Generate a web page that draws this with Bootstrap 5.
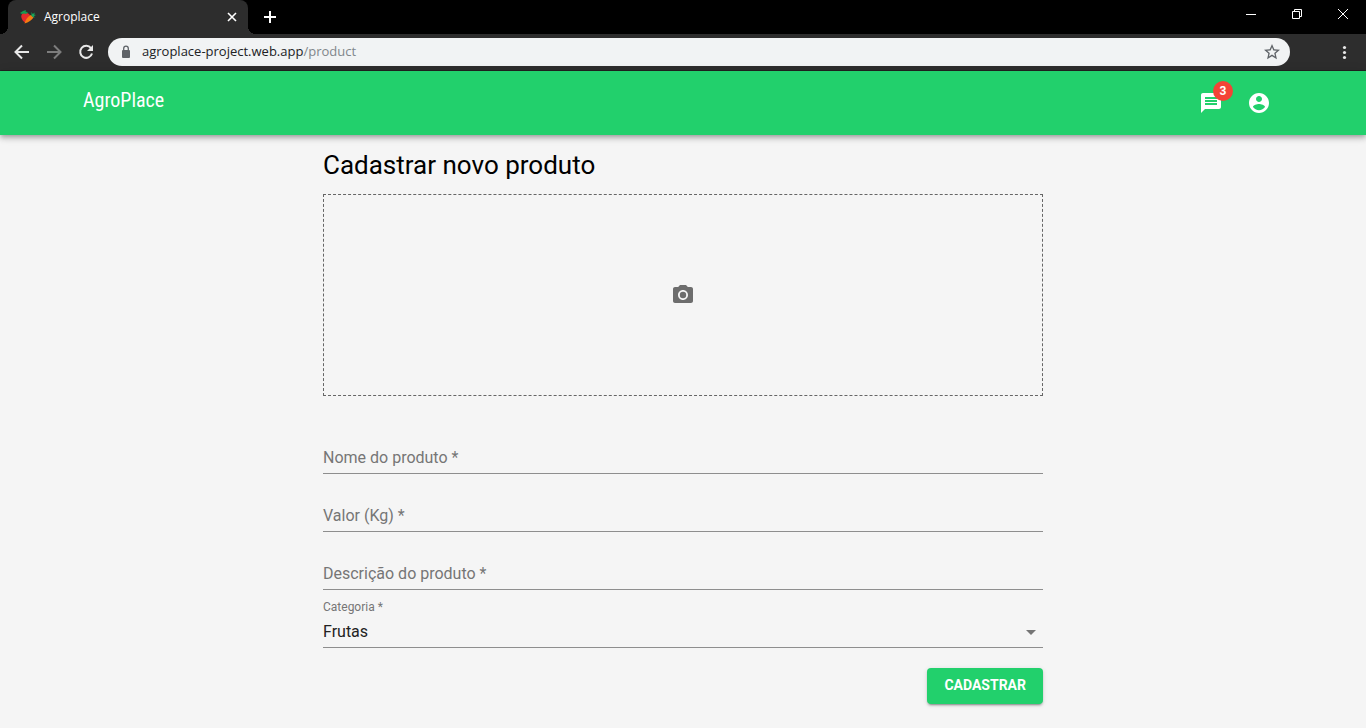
<!DOCTYPE html>
<html lang="pt-BR">
<head>
<meta charset="utf-8">
<meta name="viewport" content="width=device-width, initial-scale=1">
<title>Agroplace</title>
<link href="https://cdn.jsdelivr.net/npm/bootstrap@5.3.0/dist/css/bootstrap.min.css" rel="stylesheet">
<style>
  :root { --agro: #22d06c; --chrome: #2d2d2d; --ink-soft: #767676; }
  body { background: #f5f5f5; color: #000; font-family: Roboto, sans-serif; font-size: 16px; }
  svg { display: block; flex: none; }
  button { border: 0; background: none; padding: 0; color: inherit; }

  /* browser window */
  .browser { font-family: "Open Sans", sans-serif; color: #fff; }
  .tab-strip { background: #000; height: 34px; padding-left: 8px; }
  .browser-tab { position: relative; width: 240px; height: 34px; padding: 0 10px 0 12px; background: var(--chrome); border-radius: 8px 8px 0 0; font-size: 12px; }
  .browser-tab::before, .browser-tab::after { content: ""; position: absolute; bottom: 0; width: 8px; height: 8px; }
  .browser-tab::before { left: -8px; background: radial-gradient(circle at 0 0, #000 8px, var(--chrome) 8px); }
  .browser-tab::after { right: -8px; background: radial-gradient(circle at 100% 0, #000 8px, var(--chrome) 8px); }
  .new-tab { width: 28px; margin-left: 8px; }
  .window-btn { width: 46px; height: 28px; }
  .toolbar { background: var(--chrome); height: 37px; padding: 0 12px; border-bottom: 1px solid #222; }
  .nav-btn { width: 20px; margin-right: 12px; }
  .omnibox { height: 28px; padding: 0 10px; border-radius: 14px; background: #f1f3f4; color: #202124; font-size: 13px; margin-right: 44px; }
  .url-path { color: #80868b; }

  /* application */
  .app-bar { height: 64px; background: var(--agro); box-shadow: 0 2px 4px -1px rgba(0,0,0,.2), 0 4px 5px rgba(0,0,0,.14), 0 1px 10px rgba(0,0,0,.12); }
  .app-bar .inner { max-width: 1200px; }
  .logo { font-family: "Liberation Sans Narrow", "Roboto Condensed", sans-serif; font-size: 20px; line-height: 32px; padding-bottom: 6px; color: #fff; }
  .round-btn { width: 48px; height: 48px; color: #fff; }
  .count { position: absolute; top: 2px; right: 2px; width: 20px; height: 20px; border-radius: 50%; background: #f44336; font-size: 12px; line-height: 20px; font-weight: 700; }
  .page { max-width: 720px; padding: 14px 0; }
  .page h1 { font-size: 26px; line-height: 32px; font-weight: 400; margin-bottom: 13px; }
  .photo { height: 202px; border: 1px dashed #666; color: #6d6d6d; margin-bottom: 30px; }
  .fields { gap: 10px; }
  .field { position: relative; padding-top: 16px; }
  .field label { position: absolute; left: 0; top: 20px; line-height: 24px; color: var(--ink-soft); pointer-events: none; }
  .field label.raised, .field:focus-within label, .field:has(input:valid) label { top: -1px; font-size: 12px; line-height: 16px; }
  .field .line { display: block; width: 100%; height: 32px; padding: 0; border: 0; border-bottom: 1px solid #8e8e8e; border-radius: 0; background: transparent; color: #222; box-shadow: none; outline: 0; appearance: none; }
  .field .arrow { position: absolute; right: 0; bottom: 4px; color: #757575; pointer-events: none; }
  .submit { height: 36px; padding: 0 17px 2px; margin-top: 20px; border: 0; border-radius: 4px; background: var(--agro); color: #fff; font-size: 14px; font-weight: 700; box-shadow: 0 3px 1px -2px rgba(0,0,0,.2), 0 2px 2px rgba(0,0,0,.14), 0 1px 5px rgba(0,0,0,.12); }
</style>
</head>
<body>
<div class="browser">
  <div class="tab-strip d-flex">
    <div class="browser-tab d-flex align-items-center">
      <svg width="16" height="16" viewBox="0 0 16 16" aria-hidden="true">
        <path d="M2 5C4 3 7 3.500 9 5c2 2 1 5-1 7l-3 1.500C2.500 12 0 8 2 5z" fill="#e52b2b"/>
        <path d="M0 4l3-2 3-1-.5 1.500L8 3.500 6 5 4 4.500 2 5z" fill="#159a53"/>
        <path d="M11 6l2.500 2.500C12 11 8.500 13.500 4.500 14.500 5.500 11 8 7 11 6z" fill="#f57c12"/>
        <path d="M11.500 7l0-4 1.200 2L15 3.500 14 5.500l2 .5-2 1 .500 2z" fill="#18a558"/>
      </svg>
      <span class="ms-2 flex-grow-1">Agroplace</span>
      <button type="button" aria-label="Fechar guia"><svg width="12" height="12" viewBox="0 0 12 12" stroke="#fff" stroke-width="1.6"><path d="M2 2l8 8M10 2l-8 8"/></svg></button>
    </div>
    <button type="button" class="new-tab d-flex align-items-center justify-content-center" aria-label="Nova guia"><svg width="14" height="14" viewBox="0 0 14 14" stroke="#fff" stroke-width="2"><path d="M7 1v12M1 7h12"/></svg></button>
    <div class="d-flex ms-auto">
      <button type="button" class="window-btn d-flex align-items-center justify-content-center" aria-label="Minimizar"><svg width="10" height="10" viewBox="0 0 10 10" stroke="#fff"><path d="M0 5.500h10"/></svg></button>
      <button type="button" class="window-btn d-flex align-items-center justify-content-center" aria-label="Restaurar"><svg width="10" height="10" viewBox="0 0 10 10" fill="none" stroke="#fff"><path d="M.5 2.500h7v7h-7zM2.500 2.500v-2h7v7h-2"/></svg></button>
      <button type="button" class="window-btn d-flex align-items-center justify-content-center" aria-label="Fechar"><svg width="10" height="10" viewBox="0 0 10 10" stroke="#fff"><path d="M0 0l10 10M10 0L0 10"/></svg></button>
    </div>
  </div>
  <div class="toolbar d-flex align-items-center">
    <button type="button" class="nav-btn" aria-label="Voltar"><svg width="20" height="20" viewBox="0 0 20 20" fill="none" stroke="#e8e8e8" stroke-width="2"><path d="M17 10H4M10 3.500L3.500 10l6.500 6.500"/></svg></button>
    <button type="button" class="nav-btn" aria-label="Avançar"><svg width="20" height="20" viewBox="0 0 20 20" fill="none" stroke="#7d7d7d" stroke-width="2"><path d="M3 10h13M10 3.500l6.500 6.500-6.500 6.500"/></svg></button>
    <button type="button" class="nav-btn" aria-label="Recarregar"><svg width="20" height="20" viewBox="0 0 20 20" fill="none" stroke="#e8e8e8" stroke-width="2"><path d="M15 6.200A6 6 0 1 0 16 11.500"/><path d="M17 3v6h-6z" fill="#e8e8e8" stroke="none"/></svg></button>
    <div class="omnibox d-flex align-items-center flex-grow-1">
      <svg class="me-2" width="16" height="16" viewBox="0 0 16 16"><rect x="4" y="6" width="8" height="8" rx="1" fill="#5f6368"/><path d="M5.700 6.500V4.500a2.300 2.300 0 0 1 4.600 0v2" fill="none" stroke="#5f6368" stroke-width="1.300"/></svg>
      <div class="flex-grow-1" role="textbox" aria-label="Endereço">agroplace-project.web.app<span class="url-path">/product</span></div>
      <button type="button" aria-label="Favoritar"><svg width="16" height="16" viewBox="0 0 24 24" fill="#5f6368"><path d="M24 8.700l-8.600-.8L12 0 8.600 7.900 0 8.700l6.500 5.600L4.600 22.700 12 18.200l7.400 4.500-1.900-8.400zM12 15.900l-4.500 2.700 1.200-5.100-4-3.500 5.300-.4L12 4.700l2 4.900 5.300.4-4 3.500 1.200 5.100z"/></svg></button>
    </div>
    <button type="button" aria-label="Menu"><svg width="20" height="20" viewBox="0 0 20 20" fill="#e8e8e8"><circle cx="10.500" cy="5.500" r="1.600"/><circle cx="10.500" cy="10.500" r="1.600"/><circle cx="10.500" cy="15.500" r="1.600"/></svg></button>
  </div>
</div>

<header class="app-bar position-relative">
  <div class="inner h-100 mx-auto d-flex align-items-center justify-content-between">
    <a href="#" class="logo text-decoration-none">AgroPlace</a>
    <div class="d-flex">
      <button type="button" class="round-btn position-relative d-flex align-items-center justify-content-center" aria-label="Mensagens">
        <svg width="24" height="24" viewBox="0 0 24 24" fill="currentColor"><path d="M20 2H4c-1.100 0-1.990.9-1.990 2L2 22l4-4h14c1.100 0 2-.9 2-2V4c0-1.100-.9-2-2-2zM6 9h12v2H6V9zm12 5H6v-2h12v2zm0-6H6V6h12v2z"/></svg>
        <span class="count">3</span>
      </button>
      <button type="button" class="round-btn d-flex align-items-center justify-content-center" aria-label="Conta">
        <svg width="24" height="24" viewBox="0 0 24 24" fill="currentColor"><path d="M12 2C6.480 2 2 6.480 2 12s4.480 10 10 10 10-4.480 10-10S17.520 2 12 2zm0 3c1.660 0 3 1.340 3 3s-1.340 3-3 3-3-1.340-3-3 1.340-3 3-3zm0 14.200c-2.500 0-4.710-1.280-6-3.220.03-1.990 4-3.080 6-3.080 1.990 0 5.970 1.090 6 3.080-1.290 1.940-3.500 3.220-6 3.220z"/></svg>
      </button>
    </div>
  </div>
</header>

<main class="page mx-auto">
  <h1>Cadastrar novo produto</h1>
  <form>
    <button type="button" class="photo w-100 d-flex align-items-center justify-content-center" aria-label="Adicionar foto">
      <svg width="24" height="24" viewBox="0 0 24 24" fill="currentColor"><circle cx="12" cy="12" r="3.200"/><path d="M9 2L7.170 4H4c-1.100 0-2 .9-2 2v12c0 1.100.9 2 2 2h16c1.100 0 2-.9 2-2V6c0-1.100-.9-2-2-2h-3.170L15 2H9zm3 15c-2.760 0-5-2.240-5-5s2.240-5 5-5 5 2.240 5 5-2.240 5-5 5z"/></svg>
    </button>
    <div class="fields d-flex flex-column">
      <div class="field"><input class="line" id="nome" type="text" required><label for="nome">Nome do produto *</label></div>
      <div class="field"><input class="line" id="valor" type="text" required><label for="valor">Valor (Kg) *</label></div>
      <div class="field"><input class="line" id="descricao" type="text" required><label for="descricao">Descrição do produto *</label></div>
      <div class="field">
        <select class="line" id="categoria" required><option>Frutas</option></select>
        <label class="raised" for="categoria">Categoria *</label>
        <svg class="arrow" width="24" height="24" viewBox="0 0 24 24" fill="currentColor"><path d="M7 10l5 5 5-5z"/></svg>
      </div>
    </div>
    <div class="d-flex justify-content-end">
      <button type="submit" class="btn submit text-uppercase">Cadastrar</button>
    </div>
  </form>
</main>
<script src="https://cdn.jsdelivr.net/npm/bootstrap@5.3.0/dist/js/bootstrap.bundle.min.js"></script>
</body>
</html>
